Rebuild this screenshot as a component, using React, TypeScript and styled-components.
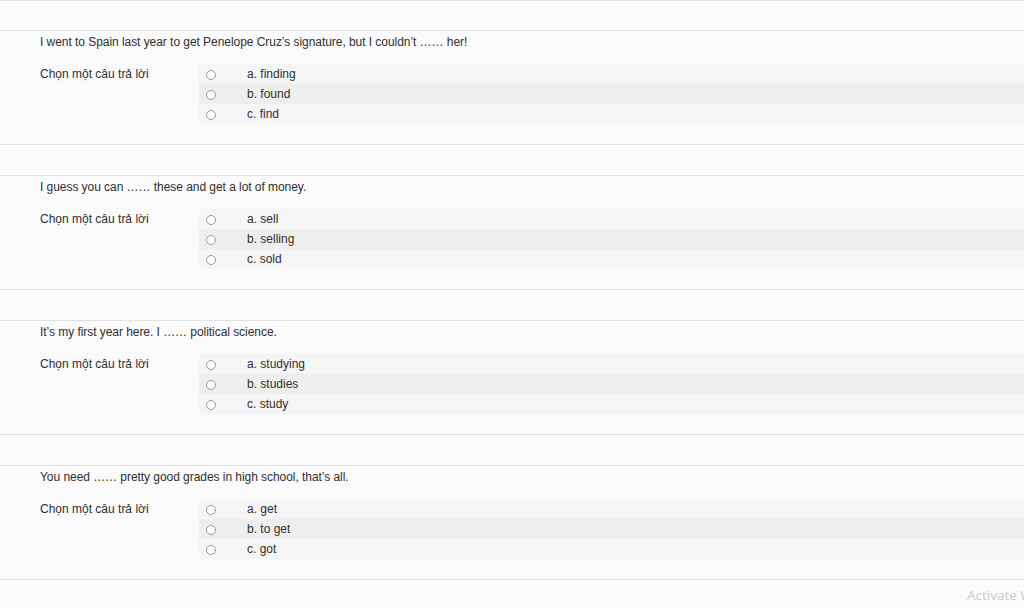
import React from "react";
import styled, { createGlobalStyle } from "styled-components";

const GlobalStyle = createGlobalStyle`
  html, body {
    margin: 0;
    padding: 0;
    background: #fbfbfb;
    overflow: hidden;
  }
  body {
    font-family: "Liberation Sans", Arial, sans-serif;
    font-size: 12px;
    color: #333;
  }
`;

const Page = styled.div`
  position: relative;
  width: 1024px;
  height: 608px;
  overflow: hidden;
  background: #fbfbfb;
`;

const TopDivider = styled.div`
  height: 0;
  border-bottom: 1px solid #e6e6e6;
  margin-bottom: 29px;
`;

const QuestionBlock = styled.section`
  border-top: 1px solid #e1e1e1;
  border-bottom: 1px solid #e1e1e1;
  background: #fafafa;
  box-sizing: border-box;
  height: 115px;
  padding: 2px 0 0 40px;
  margin-bottom: 30px;
`;

const QuestionText = styled.div`
  line-height: 18px;
  height: 18px;
  white-space: nowrap;
  color: #303030;
  letter-spacing: -0.05px;
`;

const AnswerArea = styled.div`
  display: flex;
  margin-top: 13px;
`;

const Prompt = styled.div`
  width: 159px;
  flex: none;
  line-height: 20px;
  color: #303030;
`;

const Options = styled.div`
  flex: 1;
  display: flex;
  flex-direction: column;
`;

const OptionRow = styled.label<{ $alt: boolean }>`
  display: flex;
  align-items: center;
  height: 20px;
  background: ${(p) => (p.$alt ? "#eeeeee" : "#f5f5f5")};
  color: #303030;
`;

const Radio = styled.span`
  width: 8px;
  height: 8px;
  border: 1px solid #9a9a9a;
  border-radius: 50%;
  background: #fff;
  margin-left: 7px;
  margin-top: 1px;
  flex: none;
`;

const Label = styled.span`
  margin-left: 31px;
  line-height: 20px;
`;

const Watermark = styled.div`
  position: absolute;
  left: 967px;
  top: 586px;
  font-family: "Open Sans", "Noto Sans", sans-serif;
  font-size: 13.5px;
  color: #c9c9c9;
  white-space: nowrap;
`;

type Q = { text: string; options: string[] };

const questions: Q[] = [
  {
    text: "I went to Spain last year to get Penelope Cruz\u2019s signature, but I couldn\u2019t \u2026\u2026 her!",
    options: ["a. finding", "b. found", "c. find"],
  },
  {
    text: "I guess you can \u2026\u2026 these and get a lot of money.",
    options: ["a. sell", "b. selling", "c. sold"],
  },
  {
    text: "It\u2019s my first year here. I \u2026\u2026 political science.",
    options: ["a. studying", "b. studies", "c. study"],
  },
  {
    text: "You need \u2026\u2026 pretty good grades in high school, that\u2019s all.",
    options: ["a. get", "b. to get", "c. got"],
  },
];

export default function App() {
  return (
    <>
      <GlobalStyle />
      <Page>
        <TopDivider />
        {questions.map((q, i) => (
          <QuestionBlock key={i}>
            <QuestionText>{q.text}</QuestionText>
            <AnswerArea>
              <Prompt>Chọn một câu trả lời</Prompt>
              <Options>
                {q.options.map((o, j) => (
                  <OptionRow key={j} $alt={j === 1}>
                    <Radio />
                    <Label>{o}</Label>
                  </OptionRow>
                ))}
              </Options>
            </AnswerArea>
          </QuestionBlock>
        ))}
        <Watermark>Activate Windows</Watermark>
      </Page>
    </>
  );
}
